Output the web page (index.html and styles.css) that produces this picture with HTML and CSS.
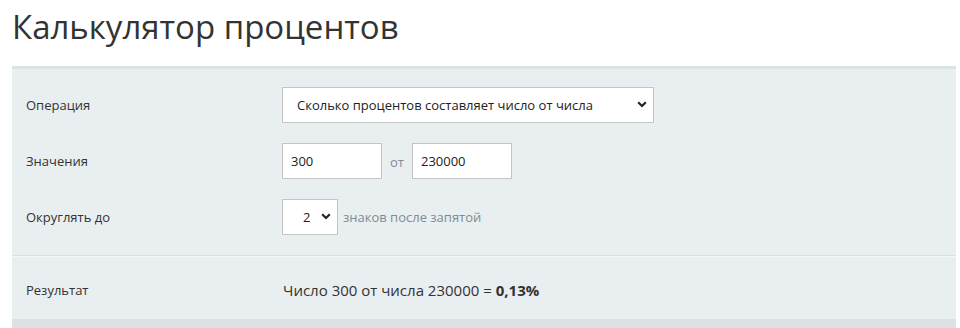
FILE: index.html
```html
<!DOCTYPE html>
<html lang="ru">
<head>
<meta charset="utf-8">
<title>Калькулятор процентов</title>
<link rel="stylesheet" href="styles.css">
</head>
<body>
<h1 class="title">Калькулятор процентов</h1>
<div class="panel">
  <div class="form">
    <div class="row">
      <div class="label">Операция</div>
      <div class="controls">
        <div class="select-wrap op">
          <select class="select">
            <option>Сколько процентов составляет число от числа</option>
          </select>
          <svg class="chev" width="10" height="7" viewBox="0 0 10 7"><path d="M1.2 1.3 L5 5 L8.8 1.3" fill="none" stroke="#222" stroke-width="2.2"/></svg>
        </div>
      </div>
    </div>
    <div class="row">
      <div class="label">Значения</div>
      <div class="controls">
        <input class="input" type="text" value="300">
        <span class="muted ot">от</span>
        <input class="input" type="text" value="230000">
      </div>
    </div>
    <div class="row">
      <div class="label">Округлять до</div>
      <div class="controls">
        <div class="select-wrap small">
          <select class="select sm">
            <option>2</option>
          </select>
          <svg class="chev" width="10" height="7" viewBox="0 0 10 7"><path d="M1.2 1.3 L5 5 L8.8 1.3" fill="none" stroke="#222" stroke-width="2.2"/></svg>
        </div>
        <span class="muted after">знаков после запятой</span>
      </div>
    </div>
  </div>
  <div class="result">
    <div class="label">Результат</div>
    <div class="result-text">Число 300 от числа 230000 = <b>0,13%</b></div>
  </div>
  <div class="foot"></div>
</div>
</body>
</html>
```
FILE: styles.css
```css
* { box-sizing: border-box; }
html, body { margin: 0; padding: 0; background: #fff; }
body {
  font-family: "Open Sans", "Noto Sans", sans-serif;
  font-size: 13px;
  color: #333;
  padding: 0 4px 0 12px;
}
.title {
  margin: 0;
  padding-top: 5px;
  height: 66px;
  font-size: 33px;
  font-weight: 400;
  line-height: 44px;
  color: #333;
}
.panel {
  background: #e9eef0;
  border-top: 3px solid #dce3e5;
}
.form {
  padding: 18px 14px 20px 14px;
  display: flex;
  flex-direction: column;
  gap: 20px;
  border-bottom: 1px solid #d8dfe1;
}
.row, .result {
  display: flex;
  align-items: center;
  height: 36px;
}
.label {
  width: 256px;
  flex: none;
  color: #333;
}
.controls {
  display: flex;
  align-items: center;
}
.select-wrap { position: relative; }
.select-wrap .chev { position: absolute; top: 14px; pointer-events: none; }
.op .chev { right: 7px; }
.small .chev { right: 7px; }
.select {
  appearance: none;
  -webkit-appearance: none;
  font-family: inherit;
  font-size: 13px;
  color: #222;
  background: #fff;
  border: 1px solid #c4c4c4;
  border-radius: 0;
  height: 36px;
  margin: 0;
  outline: none;
}
.op .select { width: 372px; padding: 0 0 0 14px; }
.select.sm { width: 56px; padding: 0 0 0 20px; }
.input {
  font-family: inherit;
  font-size: 13px;
  color: #222;
  width: 100px;
  height: 36px;
  border: 1px solid #c4c4c4;
  border-radius: 0;
  padding: 0 8px;
  margin: 0;
  background: #fff;
  outline: none;
}
.muted { color: #7e8b97; }
.ot { margin: 2px 8px 0 8px; }
.after { margin: 0 0 0 5px; }
.result {
  border-top: 1px solid #f4f7f8;
  height: 63px;
  padding: 4px 14px 0 14px;
}
.result-text { font-size: 15px; padding-left: 1px; }
.result-text b { font-weight: 700; }
.foot { height: 9px; background: #dde3e5; }
```
